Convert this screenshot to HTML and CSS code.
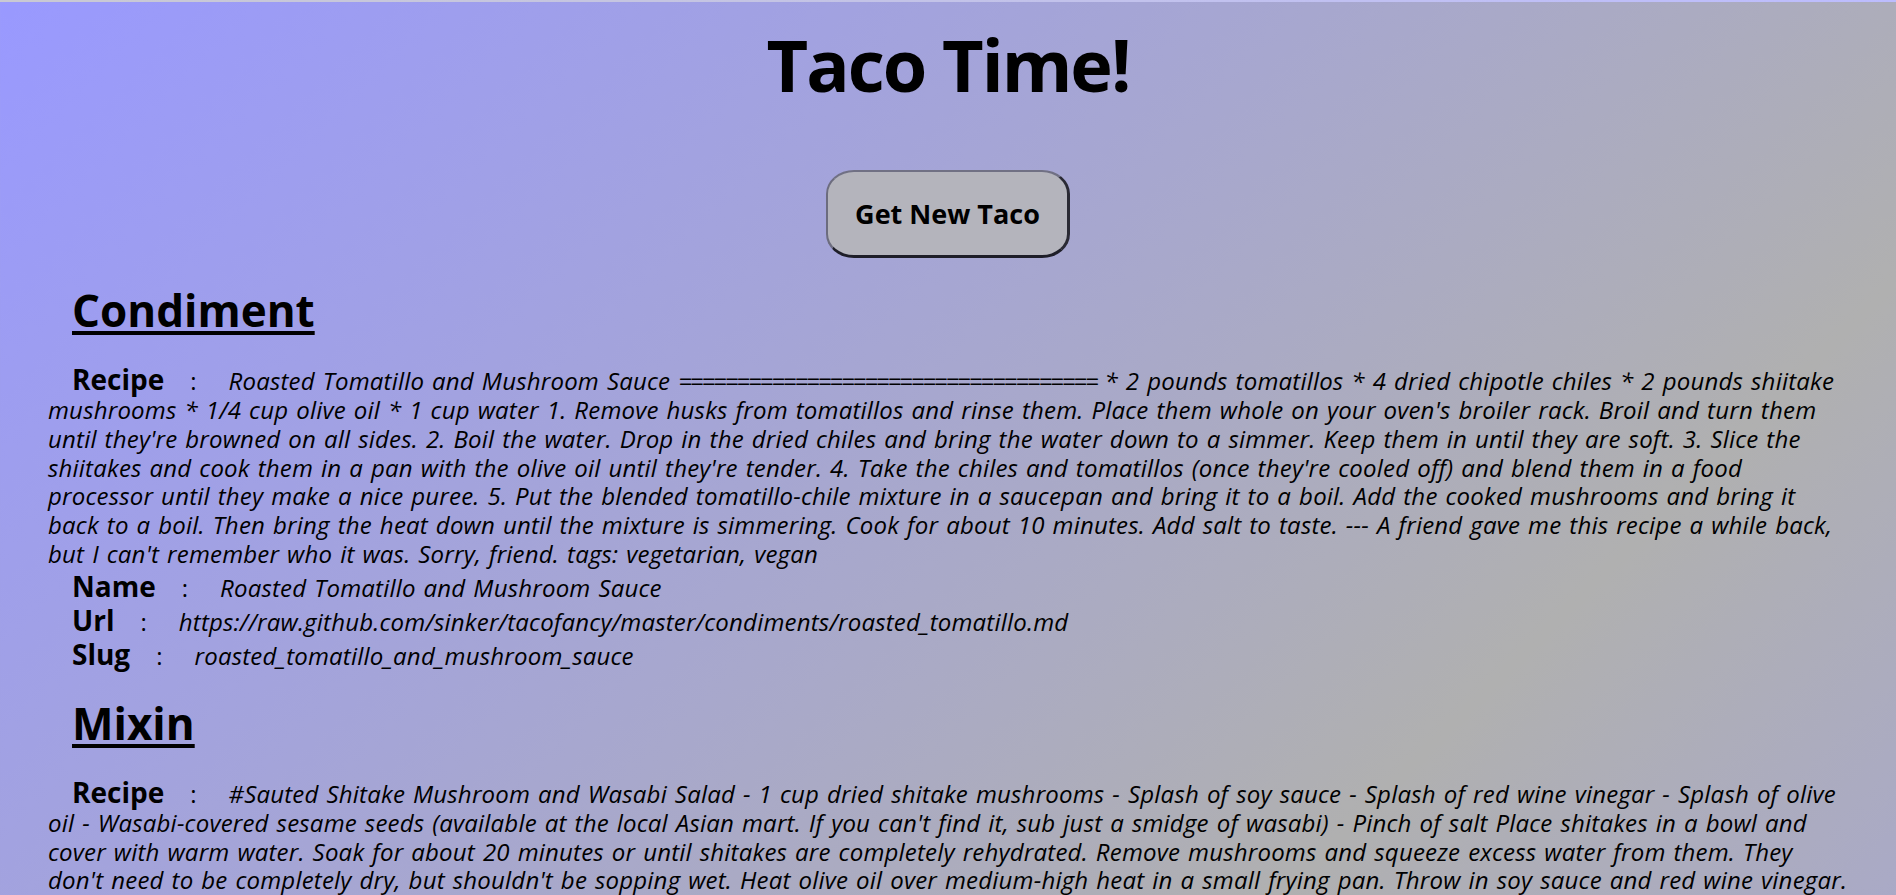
FILE: index.html
```html
<!DOCTYPE html>
<html lang="en">
<head>
<meta charset="utf-8">
<title>Taco Time!</title>
<link rel="stylesheet" href="styles.css">
</head>
<body>
<main class="page">
  <h1 class="title">Taco Time!</h1>
  <div class="actions">
    <button class="new-taco" type="button">Get New Taco</button>
  </div>

  <section class="part">
    <h2 class="part-title">Condiment</h2>
    <div class="field"><span class="label">Recipe</span><span class="sep">:</span><span class="value">Roasted Tomatillo and Mushroom Sauce <span class="rule">====================================</span> * 2 pounds tomatillos * 4 dried chipotle chiles * 2 pounds shiitake mushrooms * 1/4 cup olive oil * 1 cup water 1. Remove husks from tomatillos and rinse them. Place them whole on your oven's broiler rack. Broil and turn them until they're browned on all sides. 2. Boil the water. Drop in the dried chiles and bring the water down to a simmer. Keep them in until they are soft. 3. Slice the shiitakes and cook them in a pan with the olive oil until they're tender. 4. Take the chiles and tomatillos (once they're cooled off) and blend them in a food processor until they make a nice puree. 5. Put the blended tomatillo-chile mixture in a saucepan and bring it to a boil. Add the cooked mushrooms and bring it back to a boil. Then bring the heat down until the mixture is simmering. Cook for about 10 minutes. Add salt to taste. --- A friend gave me this recipe a while back, but I can't remember who it was. Sorry, friend. tags: vegetarian, vegan</span></div>
    <div class="field"><span class="label">Name</span><span class="sep">:</span><span class="value">Roasted Tomatillo and Mushroom Sauce</span></div>
    <div class="field"><span class="label">Url</span><span class="sep">:</span><span class="value">https://raw.github.com/sinker/tacofancy/master/condiments/roasted_tomatillo.md</span></div>
    <div class="field"><span class="label">Slug</span><span class="sep">:</span><span class="value">roasted_tomatillo_and_mushroom_sauce</span></div>
  </section>

  <section class="part">
    <h2 class="part-title">Mixin</h2>
    <div class="field"><span class="label">Recipe</span><span class="sep">:</span><span class="value">#Sauted Shitake Mushroom and Wasabi Salad - 1 cup dried shitake mushrooms - Splash of soy sauce - Splash of red wine vinegar - Splash of olive oil - Wasabi-covered sesame seeds (available at the local Asian mart. If you can't find it, sub just a smidge of wasabi) - Pinch of salt Place shitakes in a bowl and cover with warm water. Soak for about 20 minutes or until shitakes are completely rehydrated. Remove mushrooms and squeeze excess water from them. They don't need to be completely dry, but shouldn't be sopping wet. Heat olive oil over medium-high heat in a small frying pan. Throw in soy sauce and red wine vinegar. How much depends on how salty and tangy you like it. Add the shitakes and saute until they are warm and have soaked up the liquid. Remove from heat and toss with the wasabi-covered sesame seeds and a pinch of salt. tags: vegetarian, vegan</span></div>
    <div class="field"><span class="label">Name</span><span class="sep">:</span><span class="value">Sauted Shitake Mushroom and Wasabi Salad</span></div>
    <div class="field"><span class="label">Url</span><span class="sep">:</span><span class="value">https://raw.github.com/sinker/tacofancy/master/mixins/shitake_wasabi_salad.md</span></div>
    <div class="field"><span class="label">Slug</span><span class="sep">:</span><span class="value">sauted_shitake_mushroom_and_wasabi_salad</span></div>
  </section>
</main>
</body>
</html>
```

FILE: styles.css
```css
html {
  border-top: 2px solid rgba(255, 255, 255, 0.35);
  background-color: #a6a6d6;
  background-image: linear-gradient(135deg, #9999ff 0%, #b0b0b0 50%, #9999ff 100%);
  background-size: 100% 2454px;
  background-repeat: repeat-y;
  min-height: 100%;
}

body {
  margin: 0;
  font-family: "Open Sans", "Noto Sans", "Liberation Sans", sans-serif;
  color: #000;
}

.page {
  padding: 0 48px 60px;
}

.title {
  margin: 22px 0 0;
  font-size: 72px;
  line-height: 80px;
  font-weight: 700;
  letter-spacing: -2px;
  text-align: center;
}

.actions {
  display: flex;
  justify-content: center;
  margin-top: 66px;
}

.new-taco {
  box-sizing: border-box;
  width: 244px;
  height: 88px;
  padding: 0;
  background: #b4b4bc;
  border-style: solid;
  border-width: 2px 3px 3px 2px;
  border-color: #707084 #2a2a34 #1e1e28 #6c6c7e;
  border-radius: 28px / 24px;
  font-family: "Open Sans", "Noto Sans", sans-serif;
  font-size: 27px;
  font-weight: 700;
  color: #000;
}

.part-title {
  margin: 24px 0;
  padding-left: 24px;
  font-size: 44px;
  line-height: 56px;
  font-weight: 700;
  text-decoration: underline;
  text-decoration-thickness: 4px;
  text-underline-offset: 4px;
}

.field {
  font-size: 24px;
  line-height: 28.8px;
}

.label {
  margin-left: 24px;
  font-size: 28px;
  line-height: 34px;
  font-weight: 700;
}

.sep {
  margin: 0 32px 0 26px;
}

.value {
  font-style: italic;
  letter-spacing: 0.2px;
  word-spacing: 1.5px;
}

.rule {
  letter-spacing: -2.1px;
}
```
